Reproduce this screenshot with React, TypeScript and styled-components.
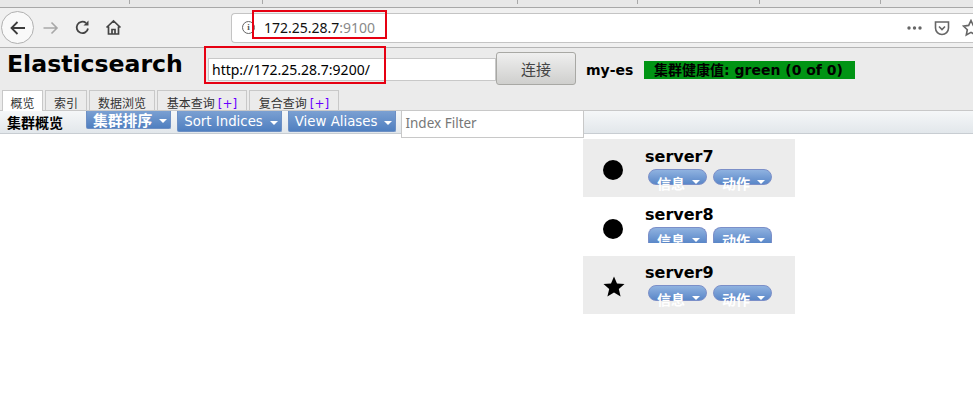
import React from "react";
import styled, { createGlobalStyle } from "styled-components";

const Global = createGlobalStyle`
  html, body { margin: 0; padding: 0; background: #fff; overflow: hidden; }
  body { font-family: "DejaVu Sans", "Noto Sans CJK SC", sans-serif; }
  * { box-sizing: border-box; }
`;

const cjkSans = `"DejaVu Sans", "Noto Sans CJK SC", sans-serif`;

const Page = styled.div`
  position: relative;
  width: 973px;
  height: 420px;
  overflow: hidden;
`;

const TabStrip = styled.div`
  height: 8px;
  background: #e8e8e8;
  border-bottom: 1px solid #a8a8a8;
  display: flex;
`;

const Tick = styled.div<{ $w: number }>`
  width: ${(p) => p.$w}px;
  height: 4px;
  border-right: 1px solid #a8a8a8;
  flex: none;
`;

const Toolbar = styled.div`
  height: 40px;
  background: #f0f0f0;
  border-bottom: 1px solid #b4b4b4;
  display: flex;
  align-items: center;
  padding-left: 1px;
`;

const BackBtn = styled.div`
  width: 33px;
  height: 33px;
  border-radius: 50%;
  border: 1px solid #b0b0b0;
  background: #f9f9f9;
  display: flex;
  align-items: center;
  justify-content: center;
  flex: none;
`;

const NavBtn = styled.div<{ $w: number }>`
  width: ${(p) => p.$w}px;
  display: flex;
  justify-content: center;
  flex: none;
`;

const UrlBar = styled.div`
  margin-left: 102px;
  flex: 1;
  height: 30px;
  background: #fff;
  border: 1px solid #c4c4c4;
  border-right: none;
  border-radius: 4px 0 0 4px;
  display: flex;
  align-items: center;
  padding-left: 10px;
`;

const InfoIcon = styled.div`
  width: 13px;
  height: 13px;
  border: 1.5px solid #666;
  border-radius: 50%;
  color: #555;
  font: bold 9px/10px "Liberation Serif", serif;
  text-align: center;
  flex: none;
`;

const UrlText = styled.div`
  margin-left: 9px;
  font: 14px "Noto Sans", sans-serif;
  color: #111;
  flex: 1;
  span { color: #8a8a8a; }
`;

const UrlActions = styled.div`
  display: flex;
  align-items: center;
  gap: 12px;
  margin-right: -7px;
`;

const Header = styled.div`
  height: 62px;
  background: #ebebeb;
  display: flex;
  align-items: flex-start;
`;

const Title = styled.h1`
  margin: 2px 0 0 7px;
  width: 201px;
  font: bold 23.6px/28px ${cjkSans};
  color: #000;
  flex: none;
`;

const Host = styled.input`
  margin: 10px 0 0 0;
  width: 288px;
  height: 23px;
  border: 1px solid #c8c8c8;
  background: #fff;
  padding: 0 3px;
  font: 14px "Noto Sans", sans-serif;
  color: #000;
  outline: none;
  flex: none;
`;

const Connect = styled.button`
  margin: 4px 0 0 0;
  width: 80px;
  height: 33px;
  border: 1px solid #a8a8a4;
  border-radius: 3px;
  background: linear-gradient(#efefef, #cfcfcd);
  font: 15px "Noto Sans CJK SC", sans-serif;
  color: #444;
  padding: 0;
  flex: none;
`;

const ClusterName = styled.div`
  margin: 12px 0 0 10px;
  font: bold 14px/20px ${cjkSans};
  color: #000;
  width: 58px;
  flex: none;
`;

const Health = styled.div`
  margin-top: 13px;
  width: 211px;
  height: 18px;
  padding-left: 10px;
  background: #009414;
  font: bold 14px/18px ${cjkSans};
  color: #000;
  white-space: nowrap;
  flex: none;
`;

const TabsRow = styled.div`
  height: 0;
  position: relative;
`;

const Tabs = styled.div`
  position: absolute;
  left: 2px;
  top: -20px;
  height: 20px;
  display: flex;
  gap: 2px;
`;

const Tab = styled.div<{ $active?: boolean; $w: number }>`
  height: ${(p) => (p.$active ? 21 : 20)}px;
  padding: 5px 0 0;
  width: ${(p) => p.$w}px;
  border: 1px solid #c8c8c8;
  border-bottom: none;
  background: ${(p) => (p.$active ? "#fff" : "#ebebeb")};
  font: 12px/14px "Noto Sans CJK SC", sans-serif;
  color: #333;
  text-align: center;
  white-space: nowrap;
  position: relative;
  z-index: 2;
  span { color: #6a00ff; font-family: "DejaVu Sans", sans-serif; margin-left: 3px; }
`;

const Bar = styled.div`
  height: 24px;
  border-top: 1px solid #c8c8c8;
  border-bottom: 1px solid #c8cdd2;
  background: linear-gradient(#f5f7f8, #e2e7eb);
  display: flex;
  align-items: flex-start;
  padding-left: 7px;
`;

const BarTitle = styled.div`
  font: bold 14px/22px "Noto Sans CJK SC", sans-serif;
  color: #000;
  width: 79px;
  flex: none;
`;

const SortBtn = styled.div<{ $cjk?: boolean }>`
  height: ${(p) => (p.$cjk ? 18 : 21)}px;
  margin-right: 6px;
  padding: 0 3px 0 6px;
  background: linear-gradient(#7ba0d2, #4f7fc0);
  border: 1px solid #6c8fc4;
  border-top: none;
  border-radius: 0 0 2px 2px;
  color: #fff;
  font: ${(p) => (p.$cjk ? `bold 14.8px/18px "Noto Sans CJK SC", sans-serif` : `13.33px/22px ${cjkSans}`)};
  display: flex;
  align-items: flex-start;
  gap: 7px;
  white-space: nowrap;
  flex: none;
`;

const Caret = styled.i<{ $top: number }>`
  display: block;
  margin-top: ${(p) => p.$top}px;
  width: 0;
  height: 0;
  border-left: 4px solid transparent;
  border-right: 4px solid transparent;
  border-top: 4px solid #fff;
  flex: none;
`;

const Filter = styled.input`
  margin: -1px 0 0 -1px;
  width: 183px;
  height: 28px;
  border: 1px solid #c8c8c8;
  background: #fff;
  padding: 0 3px 2px;
  font: 13.5px "Noto Sans", sans-serif;
  position: relative;
  outline: none;
  flex: none;
  &::placeholder { color: #777; opacity: 1; }
`;

const Nodes = styled.div`
  margin: 5px 0 0 583px;
  width: 212px;
`;

const NodeRow = styled.div<{ $shade: boolean }>`
  height: ${(p) => (p.$shade ? 58 : 59)}px;
  background: ${(p) => (p.$shade ? "#ececec" : "#fff")};
  display: flex;
`;

const NodeIcon = styled.div<{ $top: number }>`
  width: 62px;
  padding: ${(p) => p.$top}px 0 0 20px;
  flex: none;
`;

const NodeName = styled.div<{ $top: number }>`
  font: bold 16px/18px ${cjkSans};
  color: #000;
  margin-top: ${(p) => p.$top}px;
`;

const NodeButtons = styled.div`
  display: flex;
  gap: 6px;
  margin: 3px 0 0 3px;
`;

const Pill = styled.div<{ $clip: boolean }>`
  width: 59px;
  height: 16px;
  border: 1px solid #7b8fc8;
  border-bottom-width: ${(p) => (p.$clip ? 0 : 1)}px;
  border-radius: ${(p) => (p.$clip ? "8px 8px 0 0" : "8px")};
  background: linear-gradient(#8fb2e0, #5a87c8);
  color: #fff;
  padding-left: 8px;
  display: flex;
  gap: 7px;
  overflow: ${(p) => (p.$clip ? "hidden" : "visible")};
`;

const PillLabel = styled.span<{ $clip: boolean }>`
  font: bold 14px/20px "Noto Sans CJK SC", sans-serif;
  white-space: nowrap;
  margin-top: ${(p) => (p.$clip ? 2 : 3)}px;
  flex: none;
`;

const RedBox = styled.div<{ $x: number; $y: number; $w: number; $h: number }>`
  position: absolute;
  left: ${(p) => p.$x}px;
  top: ${(p) => p.$y}px;
  width: ${(p) => p.$w}px;
  height: ${(p) => p.$h}px;
  border: 2px solid #e60012;
  pointer-events: none;
  z-index: 5;
`;

const tabs = [
  { label: "概览", w: 41, active: true },
  { label: "索引", w: 42 },
  { label: "数据浏览", w: 66 },
  { label: "基本查询", w: 90, plus: true },
  { label: "复合查询", w: 90, plus: true },
];

const servers = [
  { name: "server7", master: false, clip: false, iconTop: 21, nameTop: 9 },
  { name: "server8", master: false, clip: true, iconTop: 22, nameTop: 9 },
  { name: "server9", master: true, clip: false, iconTop: 20, nameTop: 8 },
];

export default function App() {
  return (
    <Page>
      <Global />
      <TabStrip>
        <Tick $w={130} />
        <Tick $w={133} />
        <Tick $w={255} />
        <Tick $w={120} />
        <Tick $w={122} />
        <Tick $w={121} />
      </TabStrip>
      <Toolbar>
        <BackBtn>
          <svg width="18" height="18" viewBox="0 0 18 18" fill="none" stroke="#3c3c3c" strokeWidth="1.8">
            <path d="M16 9H2.5M8.5 3L2.5 9l6 6" />
          </svg>
        </BackBtn>
        <NavBtn $w={33}>
          <svg width="18" height="18" viewBox="0 0 18 18" fill="none" stroke="#a8a8a8" strokeWidth="1.6">
            <path d="M1.5 9H15M9.5 3.5L15 9l-5.5 5.5" />
          </svg>
        </NavBtn>
        <NavBtn $w={31}>
          <svg width="17" height="17" viewBox="0 0 17 17" fill="none" stroke="#444" strokeWidth="1.8">
            <path d="M14 9.5A5.7 5.7 0 1 1 12 4" />
            <path d="M14.5 1.5v5h-5z" fill="#444" stroke="none" />
          </svg>
        </NavBtn>
        <NavBtn $w={31}>
          <svg width="17" height="17" viewBox="0 0 17 17" fill="none" stroke="#444" strokeWidth="1.7">
            <path d="M1.5 8.5L8.5 2l7 6.5M3.5 7.5V15h10V7.5M7 15v-4.5h3V15" />
          </svg>
        </NavBtn>
        <UrlBar>
          <InfoIcon>i</InfoIcon>
          <UrlText>
            172.25.28.7<span>:9100</span>
          </UrlText>
          <UrlActions>
            <svg width="15" height="4" viewBox="0 0 15 4" fill="#666">
              <circle cx="2" cy="2" r="1.7" />
              <circle cx="7.5" cy="2" r="1.7" />
              <circle cx="13" cy="2" r="1.7" />
            </svg>
            <svg width="16" height="16" viewBox="0 0 16 16" fill="none" stroke="#666" strokeWidth="1.6">
              <path d="M1.5 2h13v6a6.5 6.5 0 0 1-13 0z" />
              <path d="M5 6.5l3 3 3-3" />
            </svg>
            <svg width="18" height="18" viewBox="0 0 18 18" fill="none" stroke="#666" strokeWidth="1.6">
              <path d="M9 1.5l2.3 4.9 5.2.7-3.8 3.6 1 5.3L9 13.4 4.3 16l1-5.3-3.8-3.6 5.2-.7z" />
            </svg>
          </UrlActions>
        </UrlBar>
      </Toolbar>
      <Header>
        <Title>Elasticsearch</Title>
        <Host defaultValue="http://172.25.28.7:9200/" />
        <Connect>连接</Connect>
        <ClusterName>my-es</ClusterName>
        <Health>集群健康值: green (0 of 0)</Health>
      </Header>
      <TabsRow>
        <Tabs>
          {tabs.map((t) => (
            <Tab key={t.label} $active={t.active} $w={t.w}>
              {t.label}
              {t.plus && <span>[+]</span>}
            </Tab>
          ))}
        </Tabs>
      </TabsRow>
      <Bar>
        <BarTitle>集群概览</BarTitle>
        <SortBtn $cjk>
          集群排序
          <Caret $top={8} />
        </SortBtn>
        <SortBtn>
          Sort Indices
          <Caret $top={10} />
        </SortBtn>
        <SortBtn>
          View Aliases
          <Caret $top={10} />
        </SortBtn>
        <Filter placeholder="Index Filter" />
      </Bar>
      <Nodes>
        {servers.map((s, i) => (
          <NodeRow key={s.name} $shade={i !== 1}>
            <NodeIcon $top={s.iconTop}>
              {s.master ? (
                <svg width="22" height="22" viewBox="0 0 22 22" fill="#000">
                  <path d="M11 0.5l3 7 7.5.6-5.7 4.9 1.8 7.4L11 16.4l-6.6 4 1.8-7.4L.5 8.1 8 7.5z" />
                </svg>
              ) : (
                <svg width="20" height="20" viewBox="0 0 20 20" fill="#000">
                  <circle cx="10" cy="10" r="10" />
                </svg>
              )}
            </NodeIcon>
            <div>
              <NodeName $top={s.nameTop}>{s.name}</NodeName>
              <NodeButtons>
                {["信息", "动作"].map((label) => (
                  <Pill key={label} $clip={s.clip}>
                    <PillLabel $clip={s.clip}>{label}</PillLabel>
                    <Caret $top={10} />
                  </Pill>
                ))}
              </NodeButtons>
            </div>
          </NodeRow>
        ))}
      </Nodes>
      <RedBox $x={252} $y={10} $w={135} $h={29} />
      <RedBox $x={204} $y={46} $w={182} $h={38} />
    </Page>
  );
}
